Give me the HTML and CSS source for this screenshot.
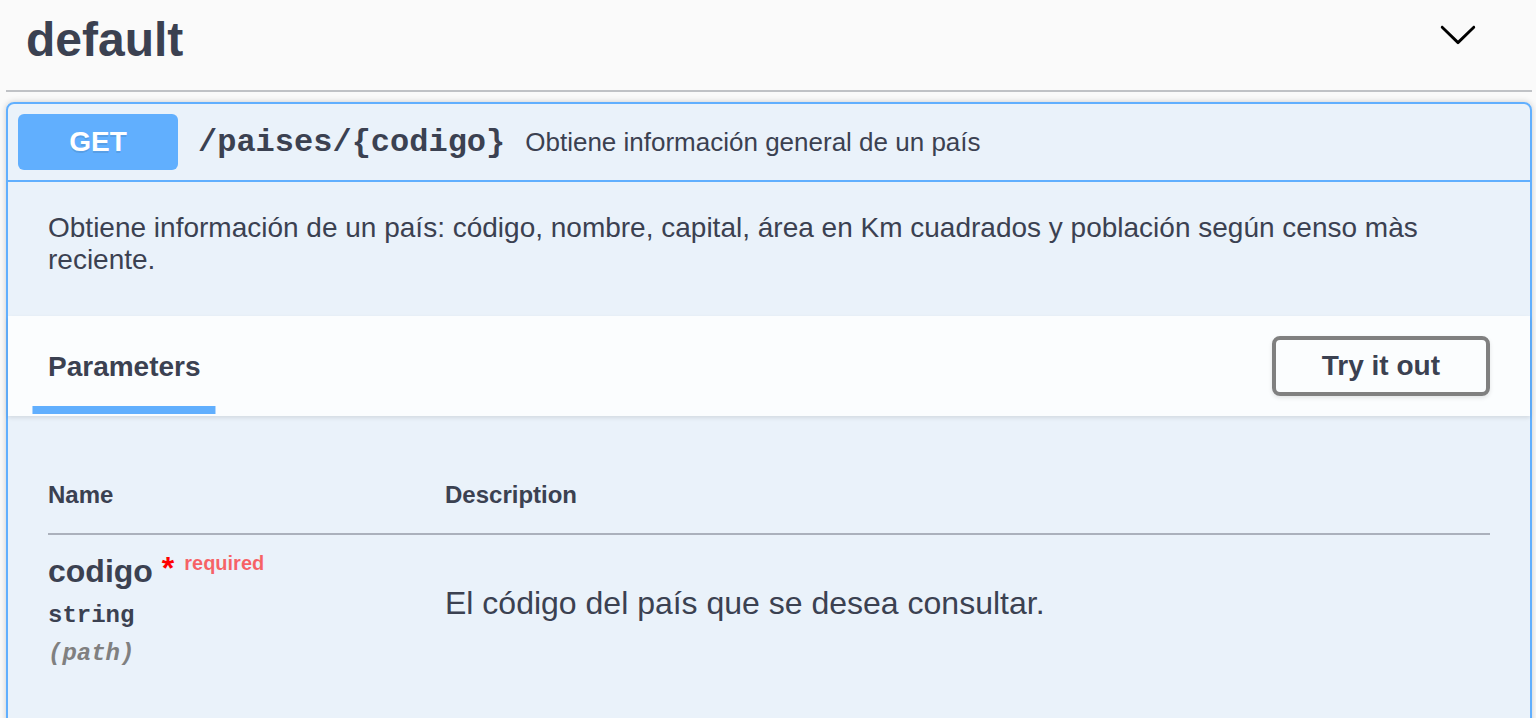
FILE: index.html
```html
<!DOCTYPE html>
<html lang="es">
<head>
<meta charset="utf-8">
<title>default</title>
<link rel="stylesheet" href="styles.css">
</head>
<body>
<div class="tag-section">
  <div class="tag-header">
    <h3 class="tag-title">default</h3>
    <svg class="tag-arrow" width="40" height="40" viewBox="0 0 20 20" aria-hidden="true"><path d="M17.418 6.109c.272-.268.709-.268.979 0s.271.701 0 .969l-7.908 7.830c-.27.268-.707.268-.979 0l-7.908-7.830c-.27-.268-.27-.701 0-.969.271-.268.709-.268.979 0L10 13.250l7.418-7.141z"/></svg>
  </div>

  <div class="opblock">
    <div class="opblock-summary">
      <span class="method">GET</span>
      <span class="path">/paises/{codigo}</span>
      <span class="summary-desc">Obtiene información general de un país</span>
    </div>

    <div class="opblock-description">
      <p>Obtiene información de un país: código, nombre, capital, área en Km cuadrados y población según censo màs reciente.</p>
    </div>

    <div class="section-header">
      <h4 class="tab-title"><span>Parameters</span></h4>
      <button class="try-btn">Try it out</button>
    </div>

    <div class="table-container">
      <table class="params">
        <thead>
          <tr>
            <th class="col-name">Name</th>
            <th class="col-desc">Description</th>
          </tr>
        </thead>
        <tbody>
          <tr>
            <td class="col-name">
              <div class="param-name">codigo<span class="star">&nbsp;*</span><span class="required">required</span></div>
              <div class="param-type">string</div>
              <div class="param-in">(path)</div>
            </td>
            <td class="col-desc">
              <p class="param-desc">El código del país que se desea consultar.</p>
            </td>
          </tr>
        </tbody>
      </table>
    </div>
  </div>
</div>
</body>
</html>
```

FILE: styles.css
```css
* { box-sizing: border-box; }

html, body {
  margin: 0;
  background: #fafafa;
}

body {
  padding: 0 4px 0 6px;
  font-family: "Liberation Sans", Arial, Helvetica, sans-serif;
  color: #3b4151;
  overflow: hidden;
}

.tag-header {
  display: flex;
  align-items: flex-start;
  justify-content: space-between;
  padding: 12px 0 22px 20px;
  border-bottom: 2px solid rgba(59, 65, 81, 0.3);
  margin-bottom: 10px;
}

.tag-title {
  margin: 0;
  font-size: 48px;
  line-height: 56px;
  font-weight: 700;
  color: #3b4151;
}

.tag-arrow {
  margin-top: 2px;
  margin-right: 54px;
  fill: #000;
}

.opblock {
  border: 2px solid #61affe;
  border-radius: 8px;
  background: rgba(97, 175, 254, 0.1);
  box-shadow: 0 0 6px rgba(0, 0, 0, 0.19);
  min-height: 700px;
}

.opblock-summary {
  display: flex;
  align-items: center;
  padding: 10px;
  border-bottom: 2px solid #61affe;
}

.method {
  display: inline-block;
  min-width: 160px;
  height: 56px;
  line-height: 56px;
  text-align: center;
  background: #61affe;
  color: #fff;
  border-radius: 6px;
  font-size: 28px;
  font-weight: 700;
  text-shadow: 0 2px 0 rgba(0, 0, 0, 0.1);
}

.path {
  padding: 0 20px;
  font-family: "Liberation Mono", "Courier New", monospace;
  font-size: 32px;
  font-weight: 700;
  color: #3b4151;
}

.summary-desc {
  font-size: 26px;
  color: #3b4151;
}

.opblock-description {
  padding: 30px 40px 40px;
}

.opblock-description p {
  margin: 0;
  font-size: 28px;
  line-height: 32px;
}

.section-header {
  display: flex;
  align-items: center;
  justify-content: space-between;
  min-height: 100px;
  padding: 17px 40px 15px;
  background: rgba(255, 255, 255, 0.8);
  box-shadow: 0 2px 4px rgba(0, 0, 0, 0.1);
}

.tab-title {
  margin: 0;
  font-size: 28px;
  line-height: 32px;
  font-weight: 700;
}

.tab-title span {
  position: relative;
  display: inline-block;
}

.tab-title span::after {
  content: "";
  position: absolute;
  left: 50%;
  bottom: -31px;
  width: 120%;
  height: 8px;
  transform: translateX(-50%);
  background: #61affe;
}

.try-btn {
  font-family: "Liberation Sans", Arial, sans-serif;
  font-size: 28px;
  font-weight: 700;
  line-height: 32px;
  color: #3b4151;
  background: transparent;
  border: 4px solid #808080;
  border-radius: 8px;
  padding: 10px 46px;
  margin-top: -2px;
  box-shadow: 0 2px 4px rgba(0, 0, 0, 0.1);
}

.table-container {
  padding: 40px;
}

.params {
  width: 100%;
  border-collapse: collapse;
}

.params th {
  text-align: left;
  font-size: 24px;
  line-height: 28px;
  font-weight: 700;
  padding: 25px 0 24px;
  border-bottom: 2px solid rgba(59, 65, 81, 0.2);
}

.params th.col-name,
.params td.col-name {
  width: 397px;
}

.params td {
  vertical-align: top;
  padding: 18px 20px 20px 0;
}

.param-name {
  font-size: 32px;
  line-height: 36px;
  font-weight: 700;
}

.star {
  position: relative;
  top: -3px;
  color: red;
}

.required {
  position: relative;
  top: -12px;
  padding: 10px;
  font-size: 20px;
  color: rgba(255, 0, 0, 0.6);
}

.param-type {
  padding: 9px 0 11px;
  font-family: "Liberation Mono", "Courier New", monospace;
  font-size: 24px;
  line-height: 27px;
  font-weight: 700;
}

.param-in {
  font-family: "Liberation Mono", "Courier New", monospace;
  font-size: 24px;
  line-height: 27px;
  font-weight: 700;
  font-style: italic;
  color: #808080;
}

.param-desc {
  margin: 32px 0 0;
  font-size: 32px;
  line-height: 36px;
}
```
